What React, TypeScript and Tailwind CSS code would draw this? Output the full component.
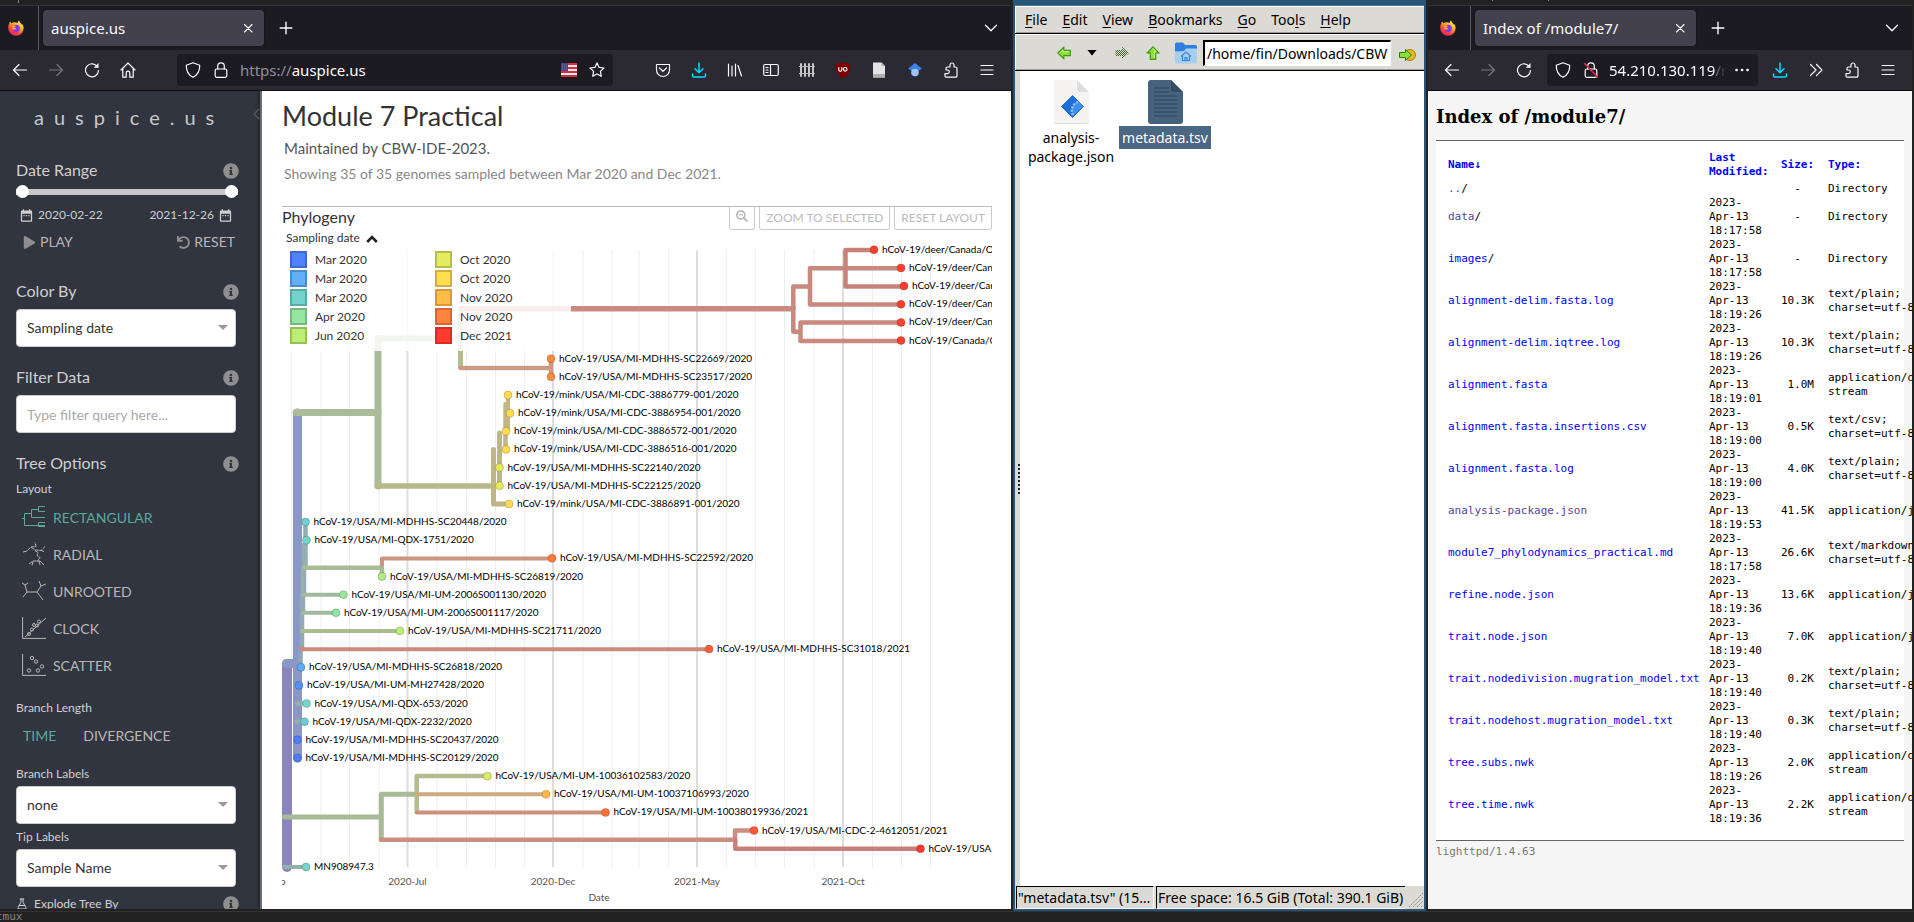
import type { ReactNode } from "react";
import { FaInfoCircle, FaPlay, FaUndo, FaSearchMinus } from "react-icons/fa";
import { MdDateRange } from "react-icons/md";
import { FlaskConical } from "lucide-react";

/* ---------- shared browser chrome ---------- */

function Icon({ children, size = 16, label }: { children: ReactNode; size?: number; label?: string }) {
  return (
    <svg
      width={size}
      height={size}
      viewBox="0 0 16 16"
      fill="none"
      stroke="currentColor"
      strokeWidth="1.2"
      strokeLinecap="round"
      strokeLinejoin="round"
      aria-label={label}
      aria-hidden={label ? undefined : true}
      className="shrink-0"
    >
      {children}
    </svg>
  );
}

function FirefoxLogo() {
  return (
    <svg width="16" height="16" viewBox="0 0 16 16" aria-hidden="true" className="shrink-0">
      <defs>
        <linearGradient id="fx" x1="0.85" y1="0.05" x2="0.25" y2="1">
          <stop offset="0" stopColor="#fff44f" />
          <stop offset="0.35" stopColor="#ffb02e" />
          <stop offset="0.65" stopColor="#ff4f3a" />
          <stop offset="1" stopColor="#f5156c" />
        </linearGradient>
      </defs>
      <path
        d="M15.4 6.2c-.4-1.2-1.3-2.1-2-2.7.4.7.6 1.3.7 1.8C13.2 3.300 11.800 2.500 11 .4 10.200.9 9.700 2 9.600 3 7 1.900 4.800 2.400 3.700 3.300 3 2.800 2.700 2 2.600 1.500.8 2.800.1 6 .3 8.600.6 12.600 3.900 15.800 8 15.800c4.700 0 8.200-3.900 7.400-9.600z"
        fill="url(#fx)"
      />
      <circle cx="8.200" cy="8.300" r="3.600" fill="#7a3bea" />
      <path d="M4.500 5.600c1.500-.6 2.700 0 3.500.8-1.200.2-1.400.8-1.300 1.400 1.300-.2 2 .8 1.200 1.500-1.200 1-3.300.4-3.700-1.300z" fill="#ffa432" />
    </svg>
  );
}

function ChromeButton({ label, children, dim }: { label: string; children: ReactNode; dim?: boolean }) {
  return (
    <button
      type="button"
      aria-label={label}
      className={`flex h-8 w-9 shrink-0 items-center justify-center ${dim ? "text-[#77767d]" : "text-[#fbfbfe]"}`}
    >
      {children}
    </button>
  );
}

const back = <path d="M14.500 8H1.500M7 2.500 1.500 8 7 13.500" />;
const forward = <path d="M1.500 8h13M9 2.500 14.500 8 9 13.500" />;
const reload = (
  <>
    <path d="M13.500 4.800A6.500 6.500 0 1 0 14.500 8.500" />
    <path d="M14.500 1v4.800H9.700z" fill="currentColor" stroke="none" />
  </>
);
const shield = <path d="M8 .8 14.700 3.300C14.900 8.500 13.500 12.600 8 15.300 2.500 12.600 1.100 8.500 1.300 3.300z" />;
const lock = (
  <>
    <rect x="2.200" y="7" width="11.600" height="8.300" rx="1.500" />
    <path d="M4.700 7V4.200a3.300 3.300 0 0 1 6.600 0V7" />
  </>
);
const download = (
  <path d="M8 1v9.500M4 6.800l4 4 4-4M1.500 12v1.500a1.500 1.500 0 0 0 1.500 1.500h10a1.500 1.500 0 0 0 1.500-1.500V12" stroke="#00ddff" strokeWidth="1.500" />
);
const puzzle = (
  <path d="M3 15.200h9.500a1.500 1.500 0 0 0 1.500-1.500V6.500A1.500 1.500 0 0 0 12.500 5H11V3a2 2 0 0 0-4 0v2H4.500A1.500 1.500 0 0 0 3 6.500V8h1.500a1.800 1.800 0 0 1 0 3.600H2v2.100c0 .8.500 1.500 1 1.500z" />
);
const menuLines = <path d="M2 3.500h12M2 8h12M2 12.500h12" />;

function TabStrip({ title, inset }: { title: string; inset?: boolean }) {
  return (
    <div className={`flex h-11 shrink-0 items-center bg-[#1c1b22] text-[#fbfbfe] ${inset ? "pl-1" : ""}`}>
      <div className="flex h-11 w-[39px] shrink-0 items-center border-r border-[#5b5a63] pl-2">
        <FirefoxLogo />
      </div>
      <div className="ml-1 flex h-9 w-[221px] shrink-0 items-center rounded bg-[#42414d] pl-2 pr-2 shadow-[0_0_2px_rgba(0,0,0,0.6)]">
        <span className="flex-1 truncate text-[15px] leading-6">{title}</span>
        <button type="button" aria-label="Close tab" className="flex h-4 w-4 items-center justify-center">
          <Icon size={16}>
            <path d="M4.500 4.500l7.500 7.500M12 4.500 4.500 12" strokeWidth="1.100" />
          </Icon>
        </button>
      </div>
      <button type="button" aria-label="New tab" className="ml-2 flex h-8 w-7 items-center justify-center">
        <Icon size={16}>
          <path d="M8 2.200v11.600M2.200 8h11.600" strokeWidth="1.400" />
        </Icon>
      </button>
      <button type="button" aria-label="List all tabs" className="ml-auto mr-3 flex h-8 w-4 items-center justify-center">
        <Icon size={16}>
          <path d="M2.500 5.200 8 10.700l5.500-5.500" strokeWidth="1.300" />
        </Icon>
      </button>
    </div>
  );
}

/* ---------- auspice sidebar ---------- */

function SectionHead({ title }: { title: string }) {
  return (
    <div className="flex h-6 items-center justify-between">
      <h2 className="text-base leading-6 text-[#d0d0d0]">{title}</h2>
      <button type="button" aria-label={`About ${title}`} className="-mr-[3px] mt-0.5 text-[#8f8f8f]">
        <FaInfoCircle size={16} />
      </button>
    </div>
  );
}

function SelectBox({ id, value }: { id: string; value: string }) {
  return (
    <div className="relative">
      <select
        id={id}
        defaultValue={value}
        className="block h-[38px] w-full appearance-none rounded border border-[#ccc] bg-white px-2.5 text-sm text-[#333]"
      >
        <option>{value}</option>
      </select>
      <svg width="10" height="5" viewBox="0 0 10 5" className="pointer-events-none absolute right-2 top-4" aria-hidden="true">
        <path d="M0 0h10L5 5z" fill="#999" />
      </svg>
    </div>
  );
}

function LayoutIcon({ children }: { children: ReactNode }) {
  return (
    <svg width="25" height="25" viewBox="0 0 25 25" fill="none" stroke="currentColor" strokeWidth="1" aria-hidden="true" className="shrink-0">
      {children}
    </svg>
  );
}

const layouts: { name: string; on?: boolean; icon: ReactNode }[] = [
  {
    name: "RECTANGULAR",
    on: true,
    icon: <path d="M0 13.500h2.500M23 20.500H2.500V8.500H9.500M23 12.500H9.500V4.500H16.500M23 1.500H16.500V6.500H23M23 17.500H16.500V21.500H23" />,
  },
  {
    name: "RADIAL",
    icon: (
      <path d="M1 10l4-1 4-4 5-.5-1-4M9 5l4 3 6 .5 4-4M19 8.500l3 1M13 8.500l3 2-1 3 3 2-3 4M7 22l4-3h7l4 4M11 19.500l-1 4M17 19l1 4" strokeDasharray="4 .6" />
    ),
  },
  { name: "UNROOTED", icon: <path d="M0 4l3 2 3-2M3 6l2 7H15l4-6-2-5M19 7l5-2M15 13l6 8M5 13l-4 5" /> },
  {
    name: "CLOCK",
    icon: (
      <>
        <path d="M.6 1v21.400H24M3 21 24 2" />
        <circle cx="7" cy="18" r="1.500" />
        <circle cx="10" cy="13.500" r="1.500" />
        <circle cx="12" cy="9" r="1.500" />
        <circle cx="15" cy="9.500" r="1.500" />
        <circle cx="17" cy="5.500" r="1.500" />
      </>
    ),
  },
  {
    name: "SCATTER",
    icon: (
      <>
        <path d="M.6 1v21.400H24" />
        <circle cx="10" cy="5" r="1.700" />
        <circle cx="14" cy="8.500" r="1.700" />
        <circle cx="20" cy="13.500" r="1.700" />
        <circle cx="7" cy="17.500" r="1.700" />
        <circle cx="16" cy="17.500" r="1.700" />
      </>
    ),
  },
];

const rangeClass =
  "h-[13px] min-w-0 flex-1 appearance-none bg-transparent [&::-webkit-slider-runnable-track]:h-[6px] [&::-webkit-slider-runnable-track]:bg-[#c8c8c8] [&::-webkit-slider-thumb]:-mt-[4px] [&::-webkit-slider-thumb]:h-[13px] [&::-webkit-slider-thumb]:w-[13px] [&::-webkit-slider-thumb]:appearance-none [&::-webkit-slider-thumb]:rounded-full [&::-webkit-slider-thumb]:bg-white";

function Sidebar() {
  return (
    <aside className="relative w-[262px] shrink-0 overflow-hidden border-r-2 border-[#6d6c78] bg-[#31353f] pl-4 pr-6 text-[#b8b8b8] shadow-[inset_-3px_0_3px_-1px_rgba(20,22,28,0.45)]">
      <svg width="7" height="12" viewBox="0 0 7 12" className="absolute right-0 top-[17px]" fill="none" stroke="#555" strokeWidth="1.500" aria-hidden="true">
        <path d="M6 1 1 6l5 5" />
      </svg>
      <h1 className="mt-2.5 pl-[18px] text-xl leading-8 tracking-[10px] whitespace-nowrap text-[#c8c8c8]">auspice.us</h1>

      <div className="mt-[25px]">
        <SectionHead title="Date Range" />
        <div className="-mr-0.5 mt-[3px] flex h-3">
          <input type="range" aria-label="Start date" min={0} max={100} defaultValue={0} className={rangeClass} />
          <input type="range" aria-label="End date" min={0} max={100} defaultValue={100} className={rangeClass} />
        </div>
        <div className="mt-2.5 flex h-4 items-center justify-between pl-[3px] pr-[3px] text-xs text-[#d0d0d0]">
          <button type="button" className="flex items-center gap-1">
            <MdDateRange size={15} />
            2020-02-22
          </button>
          <button type="button" className="flex items-center gap-1">
            2021-12-26
            <MdDateRange size={15} />
          </button>
        </div>
        <div className="mt-[9px] flex h-5 items-center justify-between pl-[7px] text-sm">
          <button type="button" className="flex items-center gap-1">
            <FaPlay size={13} className="text-[#8f8f8f]" />
            PLAY
          </button>
          <button type="button" className="flex items-center gap-1 pr-px">
            <FaUndo size={13} className="text-[#8f8f8f]" />
            RESET
          </button>
        </div>
      </div>

      <div className="mt-[27px]">
        <SectionHead title="Color By" />
        <label htmlFor="color-by" className="sr-only">Color By</label>
        <div className="mt-1.5"><SelectBox id="color-by" value="Sampling date" /></div>
      </div>

      <div className="mt-[18px]">
        <SectionHead title="Filter Data" />
        <input
          type="text"
          aria-label="Filter Data"
          placeholder="Type filter query here..."
          className="mt-1.5 block h-[38px] w-full rounded border border-[#ccc] bg-white px-2.5 text-sm placeholder:text-[#aaa]"
        />
      </div>

      <div className="mt-[18px]">
        <SectionHead title="Tree Options" />
        <h3 className="mt-1.5 text-xs leading-4 text-[#d0d0d0]">Layout</h3>
        <div className="mt-0.5 flex flex-col">
          {layouts.map((l) => (
            <button
              key={l.name}
              type="button"
              className={`flex h-[37px] items-center gap-1.5 pl-1.5 text-sm ${l.on ? "text-[#5ba99a]" : "text-[#b8b8b8]"}`}
            >
              <LayoutIcon>{l.icon}</LayoutIcon>
              {l.name}
            </button>
          ))}
        </div>
      </div>

      <div className="mt-4">
        <h3 className="text-xs leading-4 text-[#d0d0d0]">Branch Length</h3>
        <div className="mt-2.5 flex gap-[27px] pl-[7px] text-sm leading-5">
          <button type="button" className="text-[#5ba99a]">TIME</button>
          <button type="button">DIVERGENCE</button>
        </div>
      </div>

      <label htmlFor="branch-labels" className="mt-5 mb-1 block text-xs leading-4 text-[#d0d0d0]">Branch Labels</label>
      <SelectBox id="branch-labels" value="none" />
      <label htmlFor="tip-labels" className="mt-[5px] mb-1 block text-xs leading-4 text-[#d0d0d0]">Tip Labels</label>
      <SelectBox id="tip-labels" value="Sample Name" />
      <div className="mt-[9px] flex items-center gap-1.5 text-xs leading-4 text-[#d0d0d0]">
        <FlaskConical size={12} />
        Explode Tree By
        <FaInfoCircle size={16} className="-mr-[3px] ml-auto text-[#8f8f8f]" />
      </div>
    </aside>
  );
}

/* ---------- phylogeny ---------- */

const legend = [
  { label: "Mar 2020", cls: "bg-[#5081ff] border-[#3f67d2]" },
  { label: "Mar 2020", cls: "bg-[#60aff8] border-[#4a8cc8]" },
  { label: "Mar 2020", cls: "bg-[#75d3cd] border-[#5ba9a4]" },
  { label: "Apr 2020", cls: "bg-[#96e6a1] border-[#76b881]" },
  { label: "Jun 2020", cls: "bg-[#bcee75] border-[#96be5c]" },
  { label: "Oct 2020", cls: "bg-[#e5ec5e] border-[#b8bd4a]" },
  { label: "Oct 2020", cls: "bg-[#ffde50] border-[#d0b040]" },
  { label: "Nov 2020", cls: "bg-[#ffbc48] border-[#de9535]" },
  { label: "Nov 2020", cls: "bg-[#ff833b] border-[#dc6630]" },
  { label: "Dec 2021", cls: "bg-[#ff3b2d] border-[#d62d22]" },
];

const RED = "#ff402f";
const tips: [number, string, string][] = [
  [874, RED, "hCoV-19/deer/Canada/ON"],
  [901, RED, "hCoV-19/deer/Canada"],
  [904, RED, "hCoV-19/deer/Canada"],
  [901, RED, "hCoV-19/deer/Canada"],
  [901, RED, "hCoV-19/deer/Canada"],
  [901, RED, "hCoV-19/Canada/ON"],
  [551, "#ff8b3d", "hCoV-19/USA/MI-MDHHS-SC22669/2020"],
  [551, "#ff8b3d", "hCoV-19/USA/MI-MDHHS-SC23517/2020"],
  [508, "#ffdc50", "hCoV-19/mink/USA/MI-CDC-3886779-001/2020"],
  [510, "#ffdc50", "hCoV-19/mink/USA/MI-CDC-3886954-001/2020"],
  [506, "#ffdc50", "hCoV-19/mink/USA/MI-CDC-3886572-001/2020"],
  [506, "#ffdc50", "hCoV-19/mink/USA/MI-CDC-3886516-001/2020"],
  [499.5, "#e8ea5c", "hCoV-19/USA/MI-MDHHS-SC22140/2020"],
  [499.5, "#e8ea5c", "hCoV-19/USA/MI-MDHHS-SC22125/2020"],
  [509, "#ffdc50", "hCoV-19/mink/USA/MI-CDC-3886891-001/2020"],
  [305.5, "#70d0d0", "hCoV-19/USA/MI-MDHHS-SC20448/2020"],
  [306.5, "#75d5cb", "hCoV-19/USA/MI-QDX-1751/2020"],
  [552, "#ff7a39", "hCoV-19/USA/MI-MDHHS-SC22592/2020"],
  [382, "#b0ec80", "hCoV-19/USA/MI-MDHHS-SC26819/2020"],
  [343.5, "#98e69c", "hCoV-19/USA/MI-UM-2006S001130/2020"],
  [336, "#92e4a4", "hCoV-19/USA/MI-UM-2006S001117/2020"],
  [400, "#bcee75", "hCoV-19/USA/MI-MDHHS-SC21711/2020"],
  [709, "#ff6034", "hCoV-19/USA/MI-MDHHS-SC31018/2021"],
  [301, "#5cabf8", "hCoV-19/USA/MI-MDHHS-SC26818/2020"],
  [299, "#5592fd", "hCoV-19/USA/MI-UM-MH27428/2020"],
  [306.5, "#75d5cb", "hCoV-19/USA/MI-QDX-653/2020"],
  [304.5, "#6eccd8", "hCoV-19/USA/MI-QDX-2232/2020"],
  [297.5, "#4f7dff", "hCoV-19/USA/MI-MDHHS-SC20437/2020"],
  [297.5, "#4f7dff", "hCoV-19/USA/MI-MDHHS-SC20129/2020"],
  [487.5, "#dcec62", "hCoV-19/USA/MI-UM-10036102583/2020"],
  [546, "#ffb946", "hCoV-19/USA/MI-UM-10037106993/2020"],
  [605.5, "#ff7237", "hCoV-19/USA/MI-UM-10038019936/2021"],
  [754, "#ff5a33", "hCoV-19/USA/MI-CDC-2-4612051/2021"],
  [920.5, "#ff3b2d", "hCoV-19/USA/MI"],
  [306, "#75d5cb", "MN908947.3"],
];
const tipY = (i: number) => 250.8 + i * 18.15;

/* path, colour, stroke width */
const branches: [string, string, number][] = [
  ["M287 665V868", "#8a85be", 10],
  ["M286.500 664.500H297", "#8b97c4", 9],
  ["M297.500 414V759", "#8b97c4", 9],
  ["M296 413.500H378", "#a8bc9a", 7],
  ["M378 339.500V487", "#a8bc9a", 7],
  ["M378 339.500H460", "#b0bb93", 6],
  ["M460.500 309.700V368", "#b5bb8d", 5],
  ["M460.500 368.900H551V359.700M551 368V378", "#cc9b82", 4.500],
  ["M460.500 309.700H793", "#c9897e", 5.500],
  ["M793.300 309V287.500H810V269.300H901M810 287V305.500H901M793.300 309V332.800H800.500V323.600H901M800.500 332V341.900H901", "#c9897e", 4.500],
  ["M845.500 269V251H874M845.500 269V287.500H904", "#c9827a", 4.500],
  ["M377 487H493", "#b8b88c", 5.500],
  ["M493.500 504V450.500M493.500 504.900H508", "#bfb686", 5],
  ["M499.500 486V434", "#bfb686", 5],
  ["M505.500 450V405", "#c4b586", 4.500],
  ["M508 396V430", "#c4b586", 4],
  ["M305.500 524V569", "#93b0b0", 4.500],
  ["M304 546V595", "#93b0b0", 4.500],
  ["M303 570V613", "#93afb2", 4.500],
  ["M302 596V650", "#91a9b8", 4.500],
  ["M300.500 650V668", "#90a3be", 4.500],
  ["M305 568.700H382V577", "#a9bb97", 4.500],
  ["M382 566V559.400H552", "#cb957f", 4],
  ["M303.500 595.700H343", "#a0b99f", 4],
  ["M302.500 613.800H336", "#a0b99f", 4],
  ["M302 632H400", "#abbc92", 4],
  ["M301 650.200H709", "#cb8c7e", 4],
  ["M297 704.500H306", "#93b3ab", 4],
  ["M296 722.600H304", "#93b0b3", 4],
  ["M284.500 818H380", "#a8bb97", 5],
  ["M381.300 840V795.300H416", "#a8bb97", 5],
  ["M416.700 813V777H487", "#b3bc8f", 4.500],
  ["M416.700 795.300H546", "#cfa982", 4],
  ["M416.700 813.400H605", "#cd907d", 4],
  ["M381 840.700H735V831.600H754", "#cb8e80", 4.500],
  ["M735.300 841V849.700H920", "#c9807c", 4.500],
  ["M284 868H306", "#93b0ab", 4],
];

const minorX = [291.5, 321, 349.5, 379, 437, 466.5, 495.5, 524.5, 583, 612, 639, 668.5, 726.5, 755.5, 784.5, 814, 872.5, 901.5, 930.5];
const majorX = [407.5, 553, 697, 843];

function Tree() {
  return (
    <svg viewBox="282 230 710 679" preserveAspectRatio="xMinYMin meet" className="block w-full" role="img" aria-label="Phylogeny">
      {minorX.map((x) => (
        <line key={x} x1={x} x2={x} y1="251" y2="868" stroke="#eee" strokeWidth="1" />
      ))}
      {majorX.map((x) => (
        <line key={x} x1={x} x2={x} y1="251" y2="868" stroke="#ddd" strokeWidth="2" />
      ))}
      <g fill="none" strokeLinecap="round" strokeLinejoin="round">
        {branches.map(([d, c, w]) => (
          <path key={d} d={d} stroke={c} strokeWidth={w} />
        ))}
      </g>
      {tips.map(([x, c], i) => (
        <circle key={i} cx={x} cy={tipY(i)} r="4" fill={c} stroke="#000" strokeOpacity="0.18" />
      ))}
      <g fontSize="10" fill="#000">
        {tips.map(([x, , t], i) => (
          <text key={i} x={x + 8} y={tipY(i) + 3}>{t}</text>
        ))}
      </g>
      <g fontSize="10" fill="#555" textAnchor="middle">
        <text x="264" y="886">2020-Feb</text>
        <text x="407.500" y="886">2020-Jul</text>
        <text x="553" y="886">2020-Dec</text>
        <text x="697" y="886">2021-May</text>
        <text x="843" y="886">2021-Oct</text>
        <text x="599" y="902">Date</text>
      </g>
    </svg>
  );
}

const panelButton = "flex h-[23px] items-center justify-center rounded-b-[3px] border border-t-0 border-[#ccc] text-xs text-[#bbb]";

function AuspiceMain() {
  return (
    <main className="min-w-0 flex-1 overflow-hidden bg-white pl-5 pr-[19px]">
      <h1 className="mt-[5px] text-[27px] leading-10 text-[#333]">Module 7 Practical</h1>
      <p className="pl-0.5 text-[15px] leading-6 text-[#555]">Maintained by CBW-IDE-2023.</p>
      <p className="mt-0.5 pl-0.5 text-sm leading-6 text-[#888]">Showing 35 of 35 genomes sampled between Mar 2020 and Dec 2021.</p>
      <section className="mt-5 border-t border-[#bbb]">
        <div className="flex h-[22px] items-start gap-1">
          <h2 className="flex-1 text-base leading-5 text-[#333]">Phylogeny</h2>
          <button type="button" aria-label="Zoom out" className={`${panelButton} w-[26px] pb-1`}>
            <FaSearchMinus size={12} />
          </button>
          <button type="button" className={`${panelButton} px-1.5`}>ZOOM TO SELECTED</button>
          <button type="button" className={`${panelButton} px-1.5`}>RESET LAYOUT</button>
        </div>
        <div className="relative">
          <Tree />
          <div className="absolute left-0 top-0 h-[122px] w-[289px] bg-white/85 text-xs text-[#333]">
            <button type="button" className="flex h-[19px] items-center gap-1.5 pl-1 leading-[18px]">
              <span className="pb-px">Sampling date</span>
              <svg width="12" height="8" viewBox="0 0 12 8" fill="none" stroke="#222" strokeWidth="2.600" aria-hidden="true">
                <path d="M1.200 7 6 2.200 10.800 7" />
              </svg>
            </button>
            <ul className="mt-[3px] grid grid-flow-col grid-cols-[145px_144px] grid-rows-5 gap-y-0.5 pl-2">
              {legend.map((l, i) => (
                <li key={i} className="flex h-[17px] items-center gap-2">
                  <span className={`h-[17px] w-[17px] border-2 ${l.cls}`} />
                  <span className="text-xs leading-[17px]">{l.label}</span>
                </li>
              ))}
            </ul>
          </div>
        </div>
      </section>
    </main>
  );
}

function AuspiceWindow() {
  return (
    <section className="flex min-w-0 flex-col overflow-hidden bg-[#222] pb-0.5 pr-0.5" aria-label="auspice.us browser window">
      <div className="h-1.5 shrink-0 border-b border-[#333] pl-[18px]">
        <div className="h-[3px] w-px bg-[#888]" />
      </div>
      <TabStrip title="auspice.us" />
      <div className="flex h-[41px] shrink-0 items-center border-b border-[#0c0c0d] bg-[#2b2a33] pl-0.5 pr-1.5">
        <ChromeButton label="Back"><Icon>{back}</Icon></ChromeButton>
        <ChromeButton label="Forward" dim><Icon>{forward}</Icon></ChromeButton>
        <ChromeButton label="Reload"><Icon>{reload}</Icon></ChromeButton>
        <ChromeButton label="Home">
          <Icon><path d="M1 8 8 1l7 7M2.800 6.500v8.700h3.400v-4.200a1.800 1.800 0 0 1 3.600 0v4.200h3.400V6.500" /></Icon>
        </ChromeButton>
        <div className="ml-[31px] flex h-8 min-w-0 flex-1 items-center rounded bg-[#1c1b22] px-2 text-[#fbfbfe]">
          <Icon label="Tracking protection">{shield}</Icon>
          <span className="ml-3 flex"><Icon label="Secure">{lock}</Icon></span>
          <div className="ml-[11px] flex-1 whitespace-nowrap text-[15px] leading-6">
            <span className="text-[#8f8f9d]">https://</span>auspice.us
          </div>
          <svg width="16" height="14" viewBox="0 0 16 14" aria-label="US flag">
            <rect width="16" height="14" fill="#f3e9ea" />
            {[0, 4, 8, 12].map((y) => <rect key={y} y={y} width="16" height="2" fill="#d22f3f" />)}
            <rect width="7" height="8" fill="#46467f" />
            <path d="M1 2h5M1 4h5M1 6h5" stroke="#8a8ab8" strokeDasharray="1 1" strokeWidth=".7" />
          </svg>
          <span className="ml-3 flex">
            <Icon label="Bookmark"><path d="m8 .9 2.100 4.500 4.900.6-3.600 3.400.9 4.900L8 11.900l-4.300 2.400.9-4.900L1 6l4.900-.6z" /></Icon>
          </span>
        </div>
        <div className="ml-8 flex shrink-0 text-[#fbfbfe]">
          <ChromeButton label="Pocket">
            <Icon><path d="M1.500 2.500h13v5.500a6.500 6.500 0 0 1-13 0zM4.500 6 8 9.300 11.500 6" /></Icon>
          </ChromeButton>
          <ChromeButton label="Downloads"><Icon>{download}</Icon></ChromeButton>
          <ChromeButton label="Library">
            <Icon><path d="M1.500 2v12M5 4v10M8.500 2v12M11 3.500 14.500 14" /></Icon>
          </ChromeButton>
          <ChromeButton label="Sidebars">
            <Icon>
              <rect x=".7" y="2.500" width="14.600" height="11" rx="1.500" />
              <path d="M7.500 2.500v11M3 5.500h2M3 8h2M3 10.500h2" />
            </Icon>
          </ChromeButton>
          <ChromeButton label="Containers">
            <Icon><path d="M2 2v12M6 2v12M10 2v12M14 2v12" stroke="#d8d8d8" strokeWidth="1.800" /><path d="M.5 4.500h15M.5 11.500h15" stroke="#bbb" /></Icon>
          </ChromeButton>
          <ChromeButton label="uBlock Origin">
            <svg width="16" height="16" viewBox="0 0 16 16" aria-hidden="true">
              <path d="M8 0c2.300 1.400 4.600 1.600 7.300 1.700C15.500 9 14 13.200 8 16 2 13.200.5 9 .7 1.700 3.400 1.600 5.700 1.400 8 0z" fill="#800000" />
              <path d="M3.800 5.300v2.500a1.500 1.500 0 0 0 3 0V5.300M6.800 5.300" fill="none" stroke="#fff" strokeWidth="1.200" />
              <circle cx="10.200" cy="7.300" r="1.800" fill="none" stroke="#fff" strokeWidth="1.200" />
            </svg>
          </ChromeButton>
          <ChromeButton label="Page notes">
            <svg width="16" height="16" viewBox="0 0 16 16" aria-hidden="true">
              <path d="M2 .5h8.500L14 4v11.500H2z" fill="#e3e3e3" />
              <path d="M10.500.5V4H14z" fill="#aaa" />
              <path d="M2 12h12v3.500H2z" fill="#b0b0b0" />
            </svg>
          </ChromeButton>
          <ChromeButton label="Scholar">
            <svg width="16" height="16" viewBox="0 0 16 16" aria-hidden="true">
              <path d="M8 1 1.200 6.500 5 9.500h6l3.800-3z" fill="#3f7fe8" />
              <circle cx="8" cy="10.500" r="3.800" fill="#a0c3ff" />
            </svg>
          </ChromeButton>
          <ChromeButton label="Extensions"><Icon>{puzzle}</Icon></ChromeButton>
          <ChromeButton label="Menu"><Icon>{menuLines}</Icon></ChromeButton>
        </div>
      </div>
      <div className="flex min-h-0 flex-1 font-[Lato,sans-serif]">
        <Sidebar />
        <AuspiceMain />
      </div>
    </section>
  );
}

/* ---------- file manager ---------- */

const menus: [string, string, string][] = [
  ["", "F", "ile"],
  ["", "E", "dit"],
  ["", "V", "iew"],
  ["", "B", "ookmarks"],
  ["", "G", "o"],
  ["Too", "l", "s"],
  ["", "H", "elp"],
];

function GreenArrow({ rotate, faded }: { rotate: string; faded?: boolean }) {
  return (
    <svg width="14" height="14" viewBox="0 0 14 14" className={rotate} aria-hidden="true">
      {faded ? (
        <>
          <defs>
            <pattern id="dither" width="2" height="2" patternUnits="userSpaceOnUse">
              <rect width="2" height="2" fill="#dcdad5" />
              <rect width="1" height="1" fill="#3e6b25" />
              <rect x="1" y="1" width="1" height="1" fill="#3e6b25" />
            </pattern>
          </defs>
          <path d="M0 7 7 .8V4h6.500v6H7v3.200z" fill="url(#dither)" />
        </>
      ) : (
        <>
          <path d="M.8 7 6.800 1.300V4.300h6.500v5.400H6.800v3z" fill="#8ee03a" stroke="#3c9a10" strokeWidth="1.200" />
          <path d="M2.500 7 6 3.800v1.800h6" fill="none" stroke="#c8f590" />
        </>
      )}
    </svg>
  );
}

function FileManager() {
  return (
    <section className="flex min-w-0 flex-col overflow-hidden border-x-2 border-b-2 border-[#285577] bg-[#dcdad5] text-black" aria-label="File manager">
      <div className="h-1.5 shrink-0 border-b border-[#4c7899] bg-[#285577]" />
      <nav className="flex h-7 shrink-0 items-center gap-[15px] border-b border-t border-b-black border-t-white pl-2.5 text-sm shadow-[inset_1px_0_0_#fff,inset_0_-1px_0_#9d9b93]">
        {menus.map(([a, u, b]) => (
          <button key={u + b} type="button" className="leading-6">
            {a}<u className="underline-offset-2">{u}</u>{b}
          </button>
        ))}
      </nav>
      <div className="flex h-[37px] shrink-0 items-center border-b border-t border-b-black border-t-white pl-[42px] pr-2 shadow-[inset_1px_0_0_#fff,inset_0_-1px_0_#9d9b93]">
        <button type="button" aria-label="Previous folder"><GreenArrow rotate="rotate-0" /></button>
        <button type="button" aria-label="History" className="ml-4">
          <svg width="10" height="6" viewBox="0 0 10 6" aria-hidden="true"><path d="M.5 0h9L5 5.500z" fill="#000" /></svg>
        </button>
        <button type="button" aria-label="Next folder" className="ml-[18px]"><GreenArrow rotate="rotate-180" faded /></button>
        <button type="button" aria-label="Parent folder" className="ml-[17px]"><GreenArrow rotate="rotate-90" /></button>
        <button type="button" aria-label="Home folder" className="ml-[15px]">
          <svg width="22" height="22" viewBox="0 0 22 22" aria-hidden="true">
            <path d="M0 2a1.500 1.500 0 0 1 1.500-1.500H8L10 3h10.500A1.500 1.500 0 0 1 22 4.500V12H0z" fill="#2f7fe0" />
            <path d="M0 9.500 9 9l2-2.500h11V20a1.500 1.500 0 0 1-1.500 1.500h-19A1.500 1.500 0 0 1 0 20z" fill="#a6cfee" />
            <path d="M6 14.500 11 10l5 4.500M7.500 14v4.500h7V14M10 18.500V15.500h2v3" fill="none" stroke="#3a86dd" strokeWidth="1.200" />
          </svg>
        </button>
        <input
          type="text"
          aria-label="Location"
          defaultValue="/home/fin/Downloads/CBW"
          className="ml-1.5 h-[26px] min-w-0 flex-1 border-l-2 border-t-2 border-b border-r border-b-white border-l-black border-r-white border-t-black bg-white pl-0.5 text-sm"
        />
        <button type="button" aria-label="Go" className="ml-2 mt-1">
          <svg width="17" height="14" viewBox="0 0 17 14" aria-hidden="true">
            <circle cx="11" cy="7" r="5.500" fill="#e8b820" stroke="#a87c10" />
            <path d="M12.500 7 6.500 1.500v3h-6v5h6v3z" fill="#8ee03a" stroke="#2f7a10" />
          </svg>
        </button>
      </div>
      <div className="flex min-h-0 flex-1">
        <div className="flex w-[5px] shrink-0 flex-col items-end justify-center gap-0.5">
          {Array.from({ length: 8 }, (_, i) => (
            <span key={i} className="h-0.5 w-0.5 bg-[#222]" />
          ))}
        </div>
        <div className="flex flex-1 items-start bg-white pl-1 pt-[9px] text-sm leading-[19px]">
          <figure className="flex w-[94px] flex-col items-center">
            <svg width="35" height="44" viewBox="0 0 35 44" aria-hidden="true">
              <path d="M2 0h21l12 12v30a2 2 0 0 1-2 2H2a2 2 0 0 1-2-2V2a2 2 0 0 1 2-2z" fill="#f5f4f2" />
              <path d="M0 41.500a2 2 0 0 0 2 2h31a2 2 0 0 0 2-2" fill="none" stroke="#deddda" />
              <path d="M23 0v10a2 2 0 0 0 2 2h10z" fill="#deddda" />
              <path d="M18.500 15.500 29.500 26.500 18.500 37.500 7.500 26.500z" fill="#1f6fd8" stroke="#1f6fd8" strokeLinejoin="round" />
              <path d="M25 21.500a9 9 0 0 0-5.500 14.500l9.500-9.500z" fill="#3f8fee" />
              <path d="M24 22a9 9 0 0 0-5 13" fill="none" stroke="#8cbcf0" strokeWidth="2.500" strokeDasharray="2.200 1.200" />
            </svg>
            <figcaption className="mt-1 text-center">analysis-<br />package.json</figcaption>
          </figure>
          <figure className="flex w-[94px] flex-col items-center">
            <svg width="35" height="44" viewBox="0 0 35 44" aria-hidden="true">
              <path d="M3 0h20l12 12v29a3 3 0 0 1-3 3H3a3 3 0 0 1-3-3V3a3 3 0 0 1 3-3z" fill="#47627c" />
              <path d="M23 0v10a2 2 0 0 0 2 2h10z" fill="#354c62" />
              <path d="M6 8h15M6 12h15M6 16h23M6 20h23M6 24h23M6 28h23M6 32h23M6 36h23" stroke="#374f66" strokeWidth="1.600" />
            </svg>
            <figcaption className="mt-0.5 bg-[#4a6783] px-[3px] pb-0.5 pt-0.5 text-white">metadata.tsv</figcaption>
          </figure>
        </div>
      </div>
      <footer className="flex h-[23px] shrink-0 gap-0.5 bg-[#dcdad5] pl-px text-sm leading-[21px]">
        <div className="w-[138px] whitespace-nowrap border-l border-t border-b border-r border-b-white border-l-black border-r-white border-t-black pl-px">
          "metadata.tsv" (15…
        </div>
        <div className="min-w-0 flex-1 whitespace-nowrap border-l border-t border-b border-b-white border-l-black border-t-black pl-px">
          Free space: 16.5 GiB (Total: 390.1 GiB)
        </div>
        <svg width="17" height="22" viewBox="0 0 17 22" aria-hidden="true" className="shrink-0">
          <path d="M2 21 16 7M6 21 16 11M10 21l6-6M14 21l2-2" stroke="#8f8d86" strokeDasharray="2 1" />
        </svg>
      </footer>
    </section>
  );
}

/* ---------- directory index ---------- */

const PLAIN = ["text/plain;", "charset=utf-8"];
const OCTET = ["application/octet-", "stream"];
const JSON_T = ["application/json"];
const DIR = ["Directory"];

type Entry = { name: string; time?: string; size?: string; type: string[]; dir?: boolean; seen?: boolean };
const entries: Entry[] = [
  { name: "..", type: DIR, dir: true, seen: true },
  { name: "data", time: "18:17:58", type: DIR, dir: true, seen: true },
  { name: "images", time: "18:17:58", type: DIR, dir: true },
  { name: "alignment-delim.fasta.log", time: "18:19:26", size: "10.3K", type: PLAIN },
  { name: "alignment-delim.iqtree.log", time: "18:19:26", size: "10.3K", type: PLAIN },
  { name: "alignment.fasta", time: "18:19:01", size: "1.0M", type: OCTET },
  { name: "alignment.fasta.insertions.csv", time: "18:19:00", size: "0.5K", type: ["text/csv;", "charset=utf-8"] },
  { name: "alignment.fasta.log", time: "18:19:00", size: "4.0K", type: PLAIN },
  { name: "analysis-package.json", time: "18:19:53", size: "41.5K", type: JSON_T, seen: true },
  { name: "module7_phylodynamics_practical.md", time: "18:17:58", size: "26.6K", type: ["text/markdown;", "charset=utf-8"] },
  { name: "refine.node.json", time: "18:19:36", size: "13.6K", type: JSON_T },
  { name: "trait.node.json", time: "18:19:40", size: "7.0K", type: JSON_T },
  { name: "trait.nodedivision.mugration_model.txt", time: "18:19:40", size: "0.2K", type: PLAIN },
  { name: "trait.nodehost.mugration_model.txt", time: "18:19:40", size: "0.3K", type: PLAIN },
  { name: "tree.subs.nwk", time: "18:19:26", size: "2.0K", type: OCTET },
  { name: "tree.time.nwk", time: "18:19:36", size: "2.2K", type: OCTET },
];

function Lines({ parts }: { parts: string[] }) {
  return (
    <>
      {parts.map((p) => (
        <span key={p} className="block">{p}</span>
      ))}
    </>
  );
}

function IndexWindow() {
  return (
    <section className="flex min-w-0 flex-col overflow-hidden bg-[#222] px-0.5 pb-0.5" aria-label="Index browser window">
      <div className="flex h-1.5 shrink-0 gap-[55px] border-b border-[#333] pl-16">
        <div className="h-px w-px bg-[#888]" />
        <div className="h-px w-px bg-[#888]" />
      </div>
      <TabStrip title="Index of /module7/" inset />
      <div className="flex h-[41px] shrink-0 items-center border-b border-[#0c0c0d] bg-[#2b2a33] pl-1.5 pr-1.5">
        <ChromeButton label="Back"><Icon>{back}</Icon></ChromeButton>
        <ChromeButton label="Forward" dim><Icon>{forward}</Icon></ChromeButton>
        <ChromeButton label="Reload"><Icon>{reload}</Icon></ChromeButton>
        <div className="ml-[5px] flex h-8 min-w-0 flex-1 items-center rounded bg-[#1c1b22] px-2 text-[#fbfbfe]">
          <Icon label="Tracking protection">{shield}</Icon>
          <span className="ml-3 flex">
            <Icon label="Not secure">
              {lock}
              <path d="M1.500 1.500 14.500 15" stroke="#e22850" strokeWidth="1.500" />
            </Icon>
          </span>
          <div className="ml-2.5 w-[118px] shrink-0 overflow-hidden whitespace-nowrap text-[15px] leading-6 [mask-image:linear-gradient(to_right,#000_88%,transparent)]">
            54.210.130.119<span className="text-[#8f8f9d]">/module7/</span>
          </div>
          <span className="ml-auto flex">
            <Icon label="Page actions">
              <path d="M2.500 8h.1M8 8h.1M13.500 8h.1" strokeWidth="2.600" />
            </Icon>
          </span>
        </div>
        <div className="ml-1 flex shrink-0">
          <ChromeButton label="Downloads"><Icon>{download}</Icon></ChromeButton>
          <ChromeButton label="More tools"><Icon><path d="m2.500 2.500 5.500 5.500-5.500 5.500M8.500 2.500 14 8l-5.500 5.500" /></Icon></ChromeButton>
          <ChromeButton label="Extensions"><Icon>{puzzle}</Icon></ChromeButton>
          <ChromeButton label="Menu"><Icon>{menuLines}</Icon></ChromeButton>
        </div>
      </div>
      <main className="min-h-0 flex-1 overflow-hidden bg-[#f5f5f5] px-2 font-['DejaVu_Sans_Mono',monospace] text-[11px] leading-[14px] text-black">
        <h1 className="pb-[11px] pt-[13px] font-['DejaVu_Serif',serif] text-lg font-bold leading-[25px]">Index of /module7/</h1>
        <div className="border-y border-[#646464] bg-white pb-3.5 pl-3 pt-2.5">
          <table className="w-[560px] table-fixed border-collapse text-left">
            <colgroup>
              <col className="w-[261px]" />
              <col className="w-[72px]" />
              <col className="w-[47px]" />
              <col />
            </colgroup>
            <thead>
              <tr className="text-[#0000ff]">
                <th className="p-0 pb-[3px]"><a href="#name">Name↓</a></th>
                <th className="p-0 pb-[3px]"><a href="#modified"><Lines parts={["Last", "Modified:"]} /></a></th>
                <th className="p-0 pb-[3px] pr-3.5 text-right"><a href="#size">Size:</a></th>
                <th className="p-0 pb-[3px]"><a href="#type">Type:</a></th>
              </tr>
            </thead>
            <tbody>
              {entries.map((e) => (
                <tr key={e.name}>
                  <td className="whitespace-nowrap p-0">
                    <a href={`#${e.name}`} className={e.seen ? "text-[#55459c]" : "text-[#0000ff]"}>{e.name}</a>
                    {e.dir && "/"}
                  </td>
                  <td className="whitespace-nowrap p-0">{e.time && <Lines parts={["2023-", "Apr-13", e.time]} />}</td>
                  <td className="whitespace-nowrap p-0 pr-3.5 text-right">{e.size ?? "-\u00a0\u00a0"}</td>
                  <td className="whitespace-nowrap p-0"><Lines parts={e.type} /></td>
                </tr>
              ))}
            </tbody>
          </table>
        </div>
        <footer className="pt-1 text-[#787878]">lighttpd/1.4.63</footer>
      </main>
    </section>
  );
}

export default function App() {
  return (
    <div className="flex h-screen flex-col overflow-hidden bg-[#222] font-['Noto_Sans',sans-serif]">
      <div className="grid min-h-0 flex-1 grid-cols-[1013fr_413fr_488fr] grid-rows-1">
        <AuspiceWindow />
        <FileManager />
        <IndexWindow />
      </div>
      <div className="h-[11px] shrink-0 overflow-hidden border-t border-[#333] font-['DejaVu_Sans_Mono',monospace] text-[11px] leading-[10px] text-[#888]">
        <span className="-ml-1">tmux</span>
      </div>
    </div>
  );
}
